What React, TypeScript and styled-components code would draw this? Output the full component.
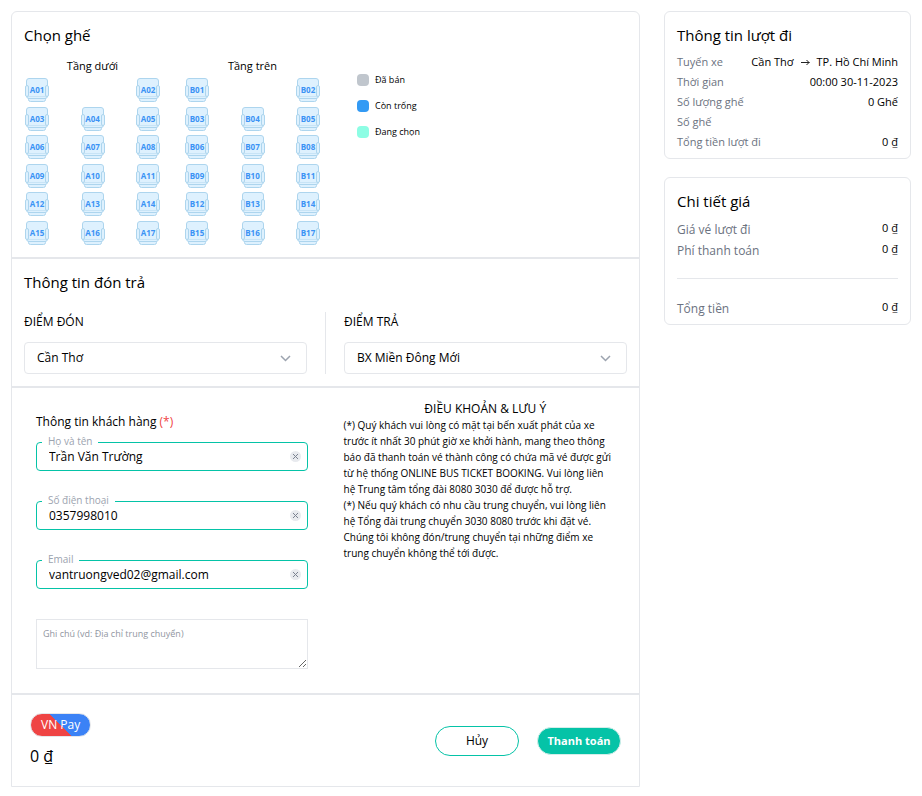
import React, { useState } from "react";
import styled, { createGlobalStyle } from "styled-components";

const line = "#e5e7eb";
const teal = "#05c3a7";

const GlobalStyle = createGlobalStyle`
  *, *::before, *::after { box-sizing: border-box; }
  body {
    margin: 0;
    background: #fff;
    color: #000;
    font-family: "Open Sans", "Noto Sans", sans-serif;
    font-size: 12px;
    line-height: 16px;
  }
  button, input, select, textarea { font: inherit; color: inherit; margin: 0; }
  h1, h2, p, dl, dd { margin: 0; }
`;

const Page = styled.div`
  display: grid;
  grid-template-columns: minmax(0, 629fr) minmax(0, 247fr);
  align-items: start;
  gap: 24px;
  padding: 11px 11px 9px;
`;

const Booking = styled.main`
  border: 1px solid ${line};
  border-radius: 6px 6px 0 0;
`;

const Section = styled.section<{ $pad: string }>`
  padding: ${(p) => p.$pad};
  & + & { border-top: 2px solid ${line}; }
`;

const Title = styled.h2<{ $weight?: number }>`
  font-size: 15px;
  line-height: 22px;
  font-weight: ${(p) => p.$weight ?? 500};
`;

const SeatArea = styled.div`
  display: flex;
  align-items: flex-start;
  margin-top: 12px;
`;

const Floor = styled.div`
  width: 135px;
  margin: 0 24px 0 1px;
`;

const FloorName = styled.p`
  font-size: 11px;
  text-align: center;
`;

const SeatGrid = styled.div`
  display: grid;
  grid-template-columns: repeat(3, 24px);
  grid-template-rows: repeat(6, 1fr);
  justify-content: space-between;
  height: 171px;
  margin-top: 4px;
`;

const SeatButton = styled.button<{ $column: number; $chosen: boolean }>`
  grid-column: ${(p) => p.$column};
  display: grid;
  width: 24px;
  height: 24px;
  padding: 0;
  border: 0;
  background: none;
  color: #3b93f5;
  font-size: 8px;
  font-weight: 700;
  line-height: 24px;
  cursor: pointer;
  --seat: ${(p) => (p.$chosen ? "#8dfde4" : "#def1fe")};
  > * { grid-area: 1 / 1; }
`;

const Legend = styled.ul`
  list-style: none;
  display: grid;
  gap: 10px;
  margin: 14px 0 0 13px;
  padding: 0;
  font-size: 9px;
`;

const LegendItem = styled.li<{ $color: string }>`
  display: flex;
  align-items: center;
  gap: 6px;
  &::before {
    content: "";
    width: 12px;
    height: 12px;
    border-radius: 4px;
    background: ${(p) => p.$color};
  }
`;

const Stops = styled.div`
  display: flex;
  margin-top: 19px;
`;

const Stop = styled.div`
  flex: 1;
  & + & {
    margin-left: 18px;
    padding-left: 18px;
    border-left: 1px solid ${line};
  }
`;

const StopLabel = styled.label`
  display: block;
  line-height: 20px;
  font-weight: 500;
`;

const SelectBox = styled.div`
  display: grid;
  align-items: center;
  margin-top: 10px;
  > * { grid-area: 1 / 1; }
  > svg { justify-self: end; margin-right: 16px; pointer-events: none; }
`;

const Select = styled.select`
  appearance: none;
  width: 100%;
  height: 32px;
  padding: 0 36px 0 12px;
  border: 1px solid ${line};
  border-radius: 4px;
  background: #fff;
`;

const Details = styled.div`
  display: grid;
  grid-template-columns: minmax(0, 272fr) minmax(0, 284fr);
  gap: 36px;
`;

const Customer = styled.form`
  padding-top: 12px;
`;

const FormTitle = styled.p`
  margin-bottom: 10px;
  line-height: 20px;
`;

const Required = styled.span`
  color: #ef4444;
`;

const Field = styled.div`
  position: relative;
  margin-bottom: 30px;
`;

const FieldLabel = styled.label`
  position: absolute;
  top: -9px;
  left: 6px;
  padding: 0 6px;
  background: #fff;
  color: #9ca3af;
  font-size: 10px;
`;

const TextInput = styled.input`
  display: block;
  width: 100%;
  height: 29px;
  padding: 0 30px 0 12px;
  border: 1px solid ${teal};
  border-radius: 4px;
  outline: 0;
  background: #fff;
`;

const ClearButton = styled.button`
  position: absolute;
  top: 9px;
  right: 7px;
  display: grid;
  place-items: center;
  width: 11px;
  height: 11px;
  padding: 0;
  border: 0;
  border-radius: 50%;
  background: #e8eaee;
  cursor: pointer;
`;

const Note = styled.textarea`
  display: block;
  width: 100%;
  height: 50px;
  padding: 6px;
  border: 1px solid ${line};
  outline: 0;
  font-size: 9px;
  &::placeholder { color: #9196a1; }
`;

const Terms = styled.div`
  padding-top: 1px;
`;

const TermsTitle = styled.p`
  text-align: center;
`;

const TermsText = styled.p`
  padding-right: 12px;
  font-size: 10px;
`;

const Footer = styled.div`
  display: flex;
  align-items: center;
  justify-content: space-between;
`;

const Payment = styled.div`
  display: grid;
  justify-items: start;
  gap: 7px;
`;

const PayButton = styled.button`
  height: 24px;
  padding: 0 10px;
  border: 1px solid ${line};
  border-radius: 12px;
  background: linear-gradient(45deg, #ef4444 50%, #3b82f6 50%) border-box;
  color: #fff;
  cursor: pointer;
`;

const Total = styled.p`
  font-size: 16px;
  line-height: 24px;
`;

const Actions = styled.div`
  display: flex;
  align-items: center;
  gap: 18px;
`;

const ActionButton = styled.button<{ $filled?: boolean }>`
  min-width: 84px;
  height: ${(p) => (p.$filled ? 28 : 30)}px;
  padding: 0 8px;
  border: 1px solid ${(p) => (p.$filled ? "#d5eeea" : teal)};
  border-radius: 15px;
  background: ${(p) => (p.$filled ? teal : "#fff")};
  color: ${(p) => (p.$filled ? "#fff" : "#000")};
  font-size: ${(p) => (p.$filled ? 11 : 12)}px;
  font-weight: ${(p) => (p.$filled ? 700 : 500)};
  cursor: pointer;
`;

const Sidebar = styled.aside`
  display: grid;
  gap: 18px;
`;

const Card = styled.section`
  padding: 12px 12px 6px;
  border: 1px solid ${line};
  border-radius: 6px;
`;

const TripList = styled.dl`
  margin-top: 6px;
  font-size: 11px;
  line-height: 20px;
`;

const PriceList = styled.dl`
  margin-top: 6px;
  line-height: 21px;
`;

const Row = styled.div`
  display: flex;
  justify-content: space-between;
`;

const Term = styled.dt`
  color: #6b7280;
`;

const Value = styled.dd`
  display: flex;
  align-items: center;
  gap: 6px;
`;

const PriceRow = styled(Row)<{ $total?: boolean }>`
  margin-top: ${(p) => (p.$total ? 18 : 0)}px;
  padding-top: ${(p) => (p.$total ? 18 : 0)}px;
  border-top: ${(p) => (p.$total ? `1px solid ${line}` : 0)};
  > dt { padding-top: 2px; line-height: 19px; }
  > dd { align-self: flex-start; line-height: 20px; font-size: 11px; }
`;

function SeatIcon() {
  return (
    <svg width="24" height="24" viewBox="0 0 24 24" fill="var(--seat)" stroke="#add5ee" aria-hidden="true">
      <path d="M3.5 19.5h17v2a2 2 0 0 1-2 2h-13a2 2 0 0 1-2-2z" />
      <rect x="1.5" y="0.5" width="21" height="20" rx="2.5" />
      <path d="M3 18.5h18" strokeOpacity=".45" />
      <rect x="0.5" y="7.5" width="3" height="11" rx="1.5" />
      <rect x="20.5" y="7.5" width="3" height="11" rx="1.5" />
    </svg>
  );
}

function Chevron() {
  return (
    <svg width="11" height="7" viewBox="0 0 11 7" fill="none" stroke="#9ca3af" strokeWidth="1.5" aria-hidden="true">
      <path d="M1 1l4.5 4.5L10 1" />
    </svg>
  );
}

function Arrow() {
  return (
    <svg width="11" height="9" viewBox="0 0 11 9" fill="none" stroke="#222" aria-hidden="true">
      <path d="M1 4.5h8.5M6.5 2l2.5 2.5L6.5 7" />
    </svg>
  );
}

const seatNumbers = Array.from({ length: 17 }, (_, i) => i + 1);

function FloorPlan({ name, prefix }: { name: string; prefix: string }) {
  const [chosen, setChosen] = useState<string[]>([]);
  const toggle = (id: string) =>
    setChosen((list) => (list.includes(id) ? list.filter((s) => s !== id) : [...list, id]));
  return (
    <Floor>
      <FloorName>{name}</FloorName>
      <SeatGrid>
        {seatNumbers.map((n) => {
          const id = prefix + String(n).padStart(2, "0");
          // The first row has no middle seat.
          const column = n === 1 ? 1 : n === 2 ? 3 : (n % 3) + 1;
          return (
            <SeatButton key={id} type="button" $column={column} $chosen={chosen.includes(id)} onClick={() => toggle(id)}>
              <SeatIcon />
              <span>{id}</span>
            </SeatButton>
          );
        })}
      </SeatGrid>
    </Floor>
  );
}

function ClearableField({ id, label, type, initial }: { id: string; label: string; type: string; initial: string }) {
  const [value, setValue] = useState(initial);
  return (
    <Field>
      <TextInput id={id} type={type} value={value} onChange={(e) => setValue(e.target.value)} />
      <FieldLabel htmlFor={id}>{label}</FieldLabel>
      <ClearButton type="button" aria-label={`Xóa ${label}`} onClick={() => setValue("")}>
        <svg width="5" height="5" viewBox="0 0 5 5" stroke="#7b8290" aria-hidden="true">
          <path d="M0 0l5 5M5 0L0 5" />
        </svg>
      </ClearButton>
    </Field>
  );
}

function StopSelect({ id, label, option }: { id: string; label: string; option: string }) {
  return (
    <Stop>
      <StopLabel htmlFor={id}>{label}</StopLabel>
      <SelectBox>
        <Select id={id}>
          <option>{option}</option>
        </Select>
        <Chevron />
      </SelectBox>
    </Stop>
  );
}

export default function App() {
  return (
    <>
      <GlobalStyle />
      <Page>
        <Booking>
          <Section $pad="12px 12px 8px">
            <Title $weight={400}>Chọn ghế</Title>
            <SeatArea>
              <FloorPlan name="Tầng dưới" prefix="A" />
              <FloorPlan name="Tầng trên" prefix="B" />
              <Legend>
                <LegendItem $color="#c0c6cd">Đã bán</LegendItem>
                <LegendItem $color="#339af4">Còn trống</LegendItem>
                <LegendItem $color="#8dfde4">Đang chọn</LegendItem>
              </Legend>
            </SeatArea>
          </Section>

          <Section $pad="12px">
            <Title>Thông tin đón trả</Title>
            <Stops>
              <StopSelect id="pickup" label="ĐIỂM ĐÓN" option="Cần Thơ" />
              <StopSelect id="dropoff" label="ĐIỂM TRẢ" option="BX Miền Đông Mới" />
            </Stops>
          </Section>

          <Section $pad="12px 12px 24px 24px">
            <Details>
              <Customer>
                <FormTitle>
                  Thông tin khách hàng <Required>(*)</Required>
                </FormTitle>
                <ClearableField id="name" label="Họ và tên" type="text" initial="Trần Văn Trường" />
                <ClearableField id="phone" label="Số điện thoại" type="tel" initial="0357998010" />
                <ClearableField id="email" label="Email" type="email" initial="vantruongved02@gmail.com" />
                <Note aria-label="Ghi chú" placeholder="Ghi chú (vd: Địa chỉ trung chuyển)" />
              </Customer>
              <Terms>
                <TermsTitle>ĐIỀU KHOẢN &amp; LƯU Ý</TermsTitle>
                <TermsText>
                  (*) Quý khách vui lòng có mặt tại bến xuất phát của xe trước ít nhất 30 phút giờ xe khởi hành, mang
                  theo thông báo đã thanh toán vé thành công có chứa mã vé được gửi từ hệ thống ONLINE BUS TICKET
                  BOOKING. Vui lòng liên hệ Trung tâm tổng đài 8080 3030 để được hỗ trợ.
                </TermsText>
                <TermsText>
                  (*) Nếu quý khách có nhu cầu trung chuyển, vui lòng liên hệ Tổng đài trung chuyển 3030 8080 trước khi
                  đặt vé. Chúng tôi không đón/trung chuyển tại những điểm xe trung chuyển không thể tới được.
                </TermsText>
              </Terms>
            </Details>
          </Section>

          <Section $pad="18px">
            <Footer>
              <Payment>
                <PayButton type="button">VN Pay</PayButton>
                <Total>0 ₫</Total>
              </Payment>
              <Actions>
                <ActionButton type="button">Hủy</ActionButton>
                <ActionButton type="button" $filled>
                  Thanh toán
                </ActionButton>
              </Actions>
            </Footer>
          </Section>
        </Booking>

        <Sidebar>
          <Card>
            <Title>Thông tin lượt đi</Title>
            <TripList>
              <Row>
                <Term>Tuyến xe</Term>
                <Value>
                  Cần Thơ <Arrow /> TP. Hồ Chí Minh
                </Value>
              </Row>
              <Row>
                <Term>Thời gian</Term>
                <Value>00:00 30-11-2023</Value>
              </Row>
              <Row>
                <Term>Số lượng ghế</Term>
                <Value>0 Ghế</Value>
              </Row>
              <Row>
                <Term>Số ghế</Term>
                <Value />
              </Row>
              <Row>
                <Term>Tổng tiền lượt đi</Term>
                <Value>0 ₫</Value>
              </Row>
            </TripList>
          </Card>

          <Card>
            <Title>Chi tiết giá</Title>
            <PriceList>
              <PriceRow>
                <Term>Giá vé lượt đi</Term>
                <Value>0 ₫</Value>
              </PriceRow>
              <PriceRow>
                <Term>Phí thanh toán</Term>
                <Value>0 ₫</Value>
              </PriceRow>
              <PriceRow $total>
                <Term>Tổng tiền</Term>
                <Value>0 ₫</Value>
              </PriceRow>
            </PriceList>
          </Card>
        </Sidebar>
      </Page>
    </>
  );
}
